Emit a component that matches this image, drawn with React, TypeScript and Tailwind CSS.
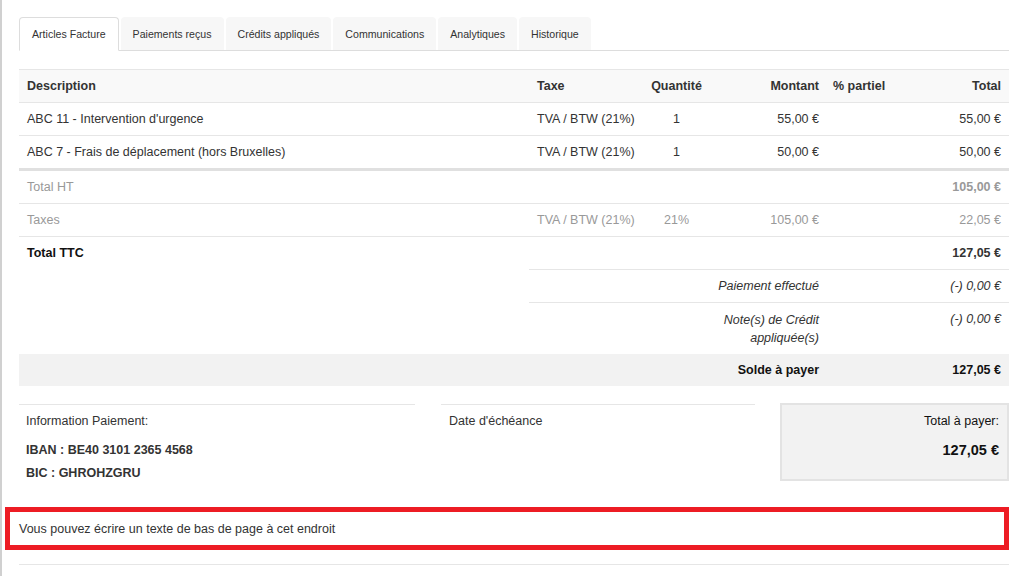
import React from 'react'

const tabs = ['Articles Facture', 'Paiements reçus', 'Crédits appliqués', 'Communications', 'Analytiques', 'Historique']

const lines = [
  { desc: 'ABC 11 - Intervention d\'urgence', tax: 'TVA / BTW (21%)', qty: '1', amount: '55,00 €', total: '55,00 €' },
  { desc: 'ABC 7 - Frais de déplacement (hors Bruxelles)', tax: 'TVA / BTW (21%)', qty: '1', amount: '50,00 €', total: '50,00 €' },
]

const td = 'px-2 pt-2 pb-[7px] leading-[17px] align-top'

export default function App() {
  return (
    <div className="min-h-screen bg-white border-l-2 border-[#d0d0d0] text-[#333] font-[family-name:'Liberation_Sans',Arial,sans-serif]">
      <div className="pl-[17px] pr-3 pt-[17px]">
        {/* Tabs */}
        <div className="flex gap-[2px] border-b border-[#ddd]">
          {tabs.map((t, i) => (
            <div
              key={t}
              className={
                i === 0
                  ? 'h-[34px] -mb-px px-3 pt-[2px] flex items-center text-[10.6px] rounded-t border border-[#ddd] border-b-white bg-white'
                  : 'h-[33px] px-3 pt-[2px] flex items-center text-[10.6px] rounded-t bg-[#f7f7f7]'
              }
            >
              {t}
            </div>
          ))}
        </div>

        {/* Lines table */}
        <table className="mt-[18px] w-full table-fixed border-collapse text-[12.5px]">
          <colgroup>
            <col className="w-[510px]" />
            <col className="w-[114px]" />
            <col className="w-[67px]" />
            <col className="w-[117px]" />
            <col className="w-[100px]" />
            <col />
          </colgroup>
          <thead>
            <tr className="bg-[#f9f9f9] border-t border-b border-[#e6e6e6] font-bold">
              <th className={`${td} text-left`}>Description</th>
              <th className={`${td} text-left`}>Taxe</th>
              <th className={`${td} text-center px-1`}>Quantité</th>
              <th className={`${td} text-right`}>Montant</th>
              <th className={`${td} text-left pl-1.5`}>% partiel</th>
              <th className={`${td} text-right pr-2`}>Total</th>
            </tr>
          </thead>
          <tbody>
            {lines.map((l, i) => (
              <tr key={i} className={i === 1 ? 'border-b-[3px] border-[#e0e0e0]' : 'border-b border-[#e6e6e6]'}>
                <td className={td}>{l.desc}</td>
                <td className={`${td} whitespace-nowrap`}>{l.tax}</td>
                <td className={`${td} text-center`}>{l.qty}</td>
                <td className={`${td} text-right`}>{l.amount}</td>
                <td className={td}></td>
                <td className={`${td} text-right`}>{l.total}</td>
              </tr>
            ))}
            <tr className="border-b border-[#e6e6e6] text-[#999]">
              <td className={td}>Total HT</td>
              <td className={td}></td>
              <td className={td}></td>
              <td className={td}></td>
              <td className={td}></td>
              <td className={`${td} text-right font-bold`}>105,00 €</td>
            </tr>
            <tr className="border-b border-[#e6e6e6] text-[#999]">
              <td className={td}>Taxes</td>
              <td className={`${td} whitespace-nowrap`}>TVA / BTW (21%)</td>
              <td className={`${td} text-center`}>21%</td>
              <td className={`${td} text-right`}>105,00 €</td>
              <td className={td}></td>
              <td className={`${td} text-right`}>22,05 €</td>
            </tr>
            <tr className="border-b border-[#e6e6e6]">
              <td rowSpan={3} className={`${td} font-bold text-[#111]`}>Total TTC</td>
              <td className={td}></td>
              <td className={td}></td>
              <td className={td}></td>
              <td className={td}></td>
              <td className={`${td} text-right font-bold`}>127,05 €</td>
            </tr>
            <tr className="border-b border-[#e6e6e6] italic">
              <td className={td}></td>
              <td className={td}></td>
              <td className={`${td} text-right whitespace-nowrap`}>Paiement effectué</td>
              <td className={td}></td>
              <td className={`${td} text-right`}>(-) 0,00 €</td>
            </tr>
            <tr className="italic">
              <td className={td}></td>
              <td className={td}></td>
              <td className="px-2 pt-2 pb-[7px] leading-[18px] align-top text-right">Note(s) de Crédit<br />appliquée(s)</td>
              <td className={td}></td>
              <td className={`${td} text-right`}>(-) 0,00 €</td>
            </tr>
            <tr className="bg-[#f2f2f2] font-bold text-[#111]">
              <td className={td}></td>
              <td className={td}></td>
              <td className={td}></td>
              <td className={`${td} text-right whitespace-nowrap`}>Solde à payer</td>
              <td className={td}></td>
              <td className={`${td} text-right`}>127,05 €</td>
            </tr>
          </tbody>
        </table>

        {/* Payment info */}
        <div className="mt-[17px] flex items-start text-[12.5px]">
          <div className="w-[396px] mt-px border-t border-[#e6e6e6] px-[7px] pt-2 leading-4">
            <p>Information Paiement:</p>
            <p className="mt-[13px] font-bold">IBAN : BE40 3101 2365 4568</p>
            <p className="mt-[7px] font-bold">BIC : GHROHZGRU</p>
          </div>
          <div className="ml-[26px] w-[314px] mt-px border-t border-[#e6e6e6] px-2 pt-2 leading-4">
            <p>Date d'échéance</p>
          </div>
          <div className="ml-auto w-[229px] h-[78px] bg-[#f2f2f2] border-2 border-[#e3e3e3] px-2 pt-2 text-right leading-4 text-[#111]">
            <p>Total à payer:</p>
            <p className="mt-[13px] text-[14.5px] font-bold">127,05 €</p>
          </div>
        </div>
      </div>

      {/* Footer text */}
      <div className="ml-[3px] mr-3 mt-[26px] h-[43px] border-[5px] border-[#ed1c24] pl-[9px] pt-[9px] text-[12.5px] leading-4">
        Vous pouvez écrire un texte de bas de page à cet endroit
      </div>
      <div className="ml-[17px] mr-3 mt-[14px] border-t border-[#e6e6e6]" />
    </div>
  )
}
